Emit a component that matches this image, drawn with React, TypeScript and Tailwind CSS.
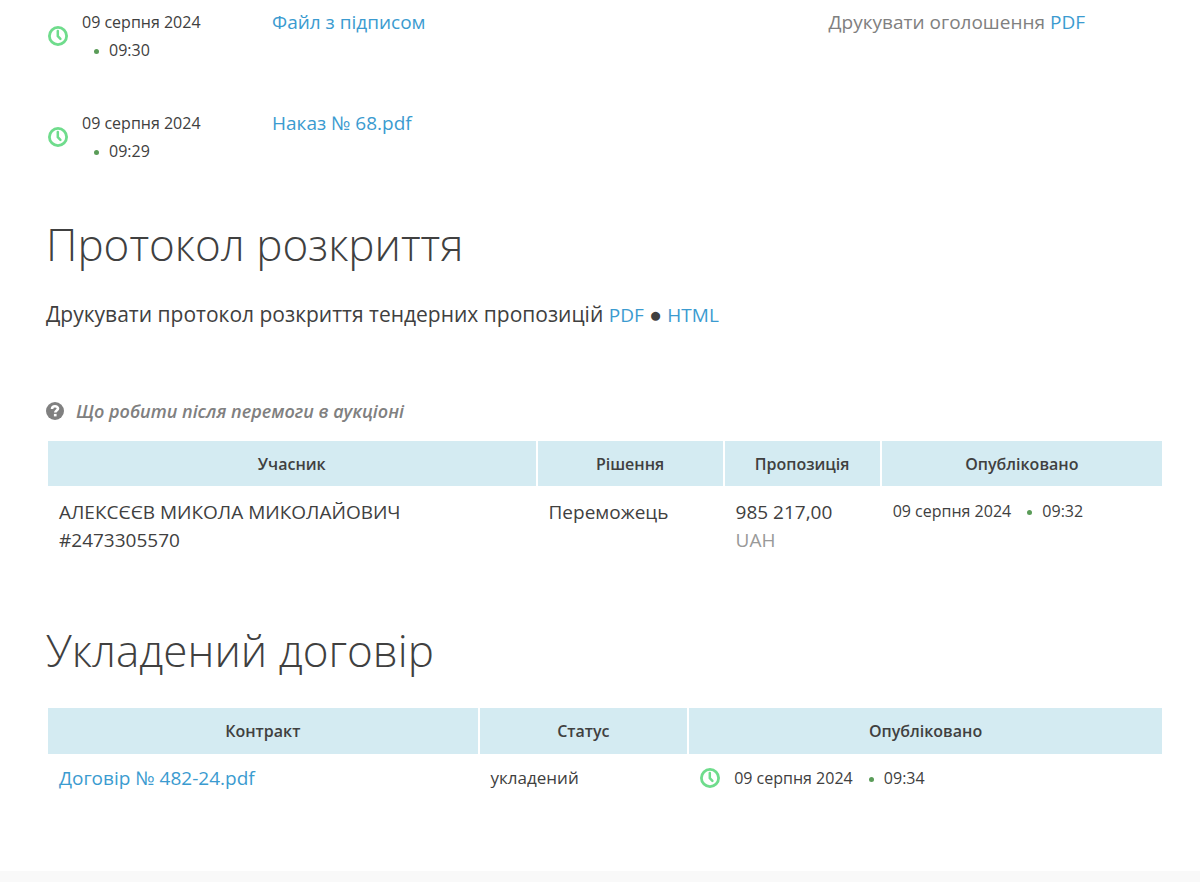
import React from 'react'

type DateProps = { time: string }

function ClockIcon() {
  return (
    <svg className="size-5 shrink-0 text-[#6fdc8c]" viewBox="0 0 20 20" fill="none" stroke="currentColor" aria-hidden="true">
      <circle cx="10" cy="10" r="8.6" strokeWidth="2.8" />
      <path d="M9.8 5v5.200l2.600 2.600" strokeWidth="2.500" strokeLinecap="round" strokeLinejoin="round" />
    </svg>
  )
}

function QuestionIcon() {
  return (
    <svg className="size-[18px] shrink-0" viewBox="0 0 18 18" aria-hidden="true">
      <circle cx="9" cy="9" r="9" fill="#808080" />
      <path d="M6 7c.1-1.900 1.300-2.700 3-2.700 1.800 0 3 .9 3 2.300 0 1.900-2.700 1.900-2.700 3.900" fill="none" stroke="#fff" strokeWidth="2.600" />
      <path d="M7.900 11.900h2.700v2.500H7.900z" fill="#fff" />
    </svg>
  )
}

function PublishedDate({ time }: DateProps) {
  return (
    <span className="text-base/7">
      09 серпня 2024{' '}
      <span className="inline-block whitespace-nowrap">
        <span className="mr-[10px] ml-3 inline-block size-[5px] rounded-full bg-[#5a9c58] align-middle" />
        {time}
      </span>
    </span>
  )
}

function Link({ children }: { children: React.ReactNode }) {
  return (
    <a href="#" className="text-[#3b9bd0] hover:underline">{children}</a>
  )
}

const documents = [
  { time: '09:30', name: 'Файл з підписом' },
  { time: '09:29', name: 'Наказ № 68.pdf' },
]

export default function App() {
  return (
    <div className="bg-white font-['Open_Sans',sans-serif] text-[#404040]">
      <main className="pt-2 pr-9 pb-[69px] pl-[46px]">
        <div className="flex justify-between">
          <ul className="flex flex-col gap-[45px]">
            {documents.map((doc) => (
              <li key={doc.name} className="flex">
                <div className="flex w-[226px] items-center gap-3.5 pr-[52px] pl-0.5">
                  <ClockIcon />
                  <PublishedDate time={doc.time} />
                </div>
                <p className="text-[19px] leading-7">
                  <Link>{doc.name}</Link>
                </p>
              </li>
            ))}
          </ul>
          <aside className="w-[30%] text-[19px] leading-7 text-[#808080]">
            Друкувати оголошення <Link>PDF</Link>
          </aside>
        </div>

        <section className="pt-[51px]">
          <h2 className="text-[44px] leading-[56px] font-light">Протокол розкриття</h2>
          <p className="pt-[26px] text-[21px] leading-8">
            Друкувати протокол розкриття тендерних пропозицій{' '}
            <span className="text-[19px]"><Link>PDF</Link></span>
            {' ● '}
            <span className="text-[19px]"><Link>HTML</Link></span>
          </p>
          <a href="#" className="mt-[66px] flex items-center gap-3 text-[18px] leading-7 font-semibold text-[#808080] italic">
            <QuestionIcon />
            Що робити після перемоги в аукціоні
          </a>
          <table className="mt-3.5 w-full table-fixed border-separate border-spacing-0.5 text-left">
            <colgroup>
              <col className="w-[44%]" />
              <col className="w-[16.7%]" />
              <col className="w-[14%]" />
              <col />
            </colgroup>
            <thead>
              <tr className="h-[45px] bg-[#d4ebf2] text-center text-base">
                <th className="font-semibold">Учасник</th>
                <th className="font-semibold">Рішення</th>
                <th className="font-semibold">Пропозиція</th>
                <th className="font-semibold">Опубліковано</th>
              </tr>
            </thead>
            <tbody>
              <tr className="align-top text-[19px] leading-7">
                <td className="px-[11px] py-2.5">
                  АЛЕКСЄЄВ МИКОЛА МИКОЛАЙОВИЧ
                  <br />
                  #2473305570
                </td>
                <td className="px-[11px] py-2.5">Переможець</td>
                <td className="px-[11px] py-2.5">
                  985 217,00
                  <br />
                  <span className="text-[#999999]">UAH</span>
                </td>
                <td className="px-[11px] py-2">
                  <PublishedDate time="09:32" />
                </td>
              </tr>
            </tbody>
          </table>
        </section>

        <section className="pt-[56px]">
          <h2 className="text-[44px] leading-[56px] font-light">Укладений договір</h2>
          <table className="mt-7 w-full table-fixed border-separate border-spacing-0.5 text-left">
            <colgroup>
              <col className="w-[38.7%]" />
              <col className="w-[18.7%]" />
              <col />
            </colgroup>
            <thead>
              <tr className="h-[46px] bg-[#d4ebf2] text-center text-base">
                <th className="font-semibold">Контракт</th>
                <th className="font-semibold">Статус</th>
                <th className="font-semibold">Опубліковано</th>
              </tr>
            </thead>
            <tbody>
              <tr className="align-top text-[19px] leading-7">
                <td className="px-[11px] py-2">
                  <Link>Договір № 482-24.pdf</Link>
                </td>
                <td className="px-[11px] py-2 text-[17px]">укладений</td>
                <td className="px-[11px] py-2">
                  <div className="flex items-center gap-3.5">
                    <ClockIcon />
                    <PublishedDate time="09:34" />
                  </div>
                </td>
              </tr>
            </tbody>
          </table>
        </section>
      </main>
      <footer className="h-3 bg-[#f9f9f9]" />
    </div>
  )
}
